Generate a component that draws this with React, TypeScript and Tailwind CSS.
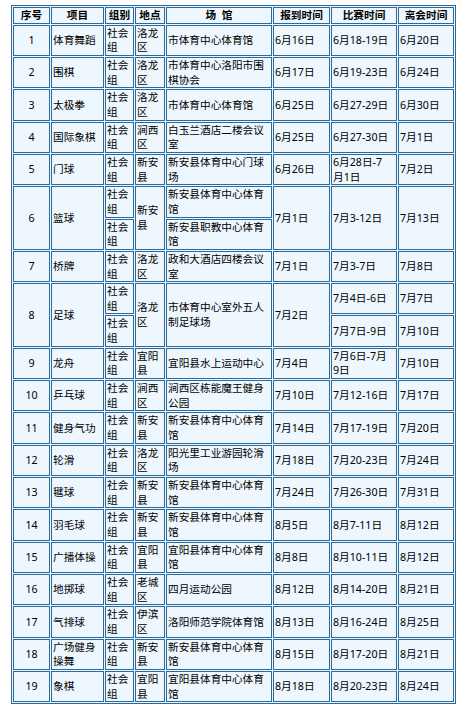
import React from "react"

type Row = {
  no: string
  item: string
  place: string
  venue: string
  arrive: string
  match: React.ReactNode
  leave: string
}

const cell = "border border-[#2b6a9a] bg-[#eef7fe] px-px py-0 align-middle text-left"
const head = "border border-[#2b6a9a] bg-[#eef7fe] px-px py-0 align-middle text-center font-bold"

// serial number cell, centred
function Num(props: { children: React.ReactNode; rowSpan?: number }) {
  return (
    <td rowSpan={props.rowSpan} className="border border-[#2b6a9a] bg-[#eef7fe] px-0 py-0 text-center align-middle">
      {props.children}
    </td>
  )
}

const top: Row[] = [
  { no: "1", item: "体育舞蹈", place: "洛龙区", venue: "市体育中心体育馆", arrive: "6月16日", match: "6月18-19日", leave: "6月20日" },
  { no: "2", item: "围棋", place: "洛龙区", venue: "市体育中心洛阳市围棋协会", arrive: "6月17日", match: "6月19-23日", leave: "6月24日" },
  { no: "3", item: "太极拳", place: "洛龙区", venue: "市体育中心体育馆", arrive: "6月25日", match: "6月27-29日", leave: "6月30日" },
  { no: "4", item: "国际象棋", place: "涧西区", venue: "白玉兰酒店二楼会议室", arrive: "6月25日", match: "6月27-30日", leave: "7月1日" },
  {
    no: "5",
    item: "门球",
    place: "新安县",
    venue: "新安县体育中心门球场",
    arrive: "6月26日",
    match: (
      <>
        6月28日-7
        <br />
        月1日
      </>
    ),
    leave: "7月2日",
  },
]

const bottom: Row[] = [
  {
    no: "9",
    item: "龙舟",
    place: "宜阳县",
    venue: "宜阳县水上运动中心",
    arrive: "7月4日",
    match: (
      <>
        7月6日-7月
        <br />
        9日
      </>
    ),
    leave: "7月10日",
  },
  { no: "10", item: "乒乓球", place: "涧西区", venue: "涧西区栋能魔王健身公园", arrive: "7月10日", match: "7月12-16日", leave: "7月17日" },
  { no: "11", item: "健身气功", place: "新安县", venue: "新安县体育中心体育馆", arrive: "7月14日", match: "7月17-19日", leave: "7月20日" },
  { no: "12", item: "轮滑", place: "洛龙区", venue: "阳光里工业游园轮滑场", arrive: "7月18日", match: "7月20-23日", leave: "7月24日" },
  { no: "13", item: "毽球", place: "新安县", venue: "新安县体育中心体育馆", arrive: "7月24日", match: "7月26-30日", leave: "7月31日" },
  { no: "14", item: "羽毛球", place: "新安县", venue: "新安县体育中心体育馆", arrive: "8月5日", match: "8月7-11日", leave: "8月12日" },
  { no: "15", item: "广播体操", place: "宜阳县", venue: "宜阳县体育中心体育馆", arrive: "8月8日", match: "8月10-11日", leave: "8月12日" },
  { no: "16", item: "地掷球", place: "老城区", venue: "四月运动公园", arrive: "8月12日", match: "8月14-20日", leave: "8月21日" },
  { no: "17", item: "气排球", place: "伊滨区", venue: "洛阳师范学院体育馆", arrive: "8月13日", match: "8月16-24日", leave: "8月25日" },
  { no: "18", item: "广场健身操舞", place: "新安县", venue: "新安县体育中心体育馆", arrive: "8月15日", match: "8月17-20日", leave: "8月21日" },
  { no: "19", item: "象棋", place: "宜阳县", venue: "宜阳县体育中心体育馆", arrive: "8月18日", match: "8月20-23日", leave: "8月24日" },
]

function PlainRow({ r }: { r: Row }) {
  return (
    <tr>
      <Num>{r.no}</Num>
      <td className={cell}>{r.item}</td>
      <td className={cell}>社会组</td>
      <td className={cell}>{r.place}</td>
      <td className={cell}>{r.venue}</td>
      <td className={cell}>{r.arrive}</td>
      <td className={cell}>{r.match}</td>
      <td className={cell}>{r.leave}</td>
    </tr>
  )
}

export default function App() {
  return (
    <div className="min-h-screen bg-white pl-[11px] pt-[5px] font-['Noto_Sans','Noto_Sans_CJK_SC',sans-serif] text-[10.67px] leading-[14.65px] text-black">
      <table className="w-[445px] table-fixed border-separate border-spacing-px border border-[#2b6a9a] bg-[#eef7fe]">
        <thead>
          <tr>
            <th className={head + " w-[37px]"}>序号</th>
            <th className={head + " w-[53px]"}>项目</th>
            <th className={head + " w-[29px]"}>组别</th>
            <th className={head + " w-[30px]"}>地点</th>
            <th className={head + " w-[106px]"}>场&nbsp;&nbsp;馆</th>
            <th className={head + " w-[57px]"}>报到时间</th>
            <th className={head + " w-[66px]"}>比赛时间</th>
            <th className={head + " w-[56px]"}>离会时间</th>
          </tr>
        </thead>
        <tbody>
          {top.map((r) => (
            <PlainRow key={r.no} r={r} />
          ))}

          {/* 篮球: two venues */}
          <tr>
            <Num rowSpan={2}>6</Num>
            <td rowSpan={2} className={cell}>篮球</td>
            <td className={cell}>社会组</td>
            <td rowSpan={2} className={cell}>新安县</td>
            <td className={cell}>新安县体育中心体育馆</td>
            <td rowSpan={2} className={cell}>7月1日</td>
            <td rowSpan={2} className={cell}>7月3-12日</td>
            <td rowSpan={2} className={cell}>7月13日</td>
          </tr>
          <tr>
            <td className={cell}>社会组</td>
            <td className={cell}>新安县职教中心体育馆</td>
          </tr>

          <PlainRow
            r={{ no: "7", item: "桥牌", place: "洛龙区", venue: "政和大酒店四楼会议室", arrive: "7月1日", match: "7月3-7日", leave: "7月8日" }}
          />

          {/* 足球: two rounds */}
          <tr>
            <Num rowSpan={2}>8</Num>
            <td rowSpan={2} className={cell}>足球</td>
            <td className={cell}>社会组</td>
            <td rowSpan={2} className={cell}>洛龙区</td>
            <td rowSpan={2} className={cell}>市体育中心室外五人制足球场</td>
            <td rowSpan={2} className={cell}>7月2日</td>
            <td className={cell}>7月4日-6日</td>
            <td className={cell}>7月7日</td>
          </tr>
          <tr>
            <td className={cell}>社会组</td>
            <td className={cell}>7月7日-9日</td>
            <td className={cell}>7月10日</td>
          </tr>

          {bottom.map((r) => (
            <PlainRow key={r.no} r={r} />
          ))}
        </tbody>
      </table>
    </div>
  )
}
